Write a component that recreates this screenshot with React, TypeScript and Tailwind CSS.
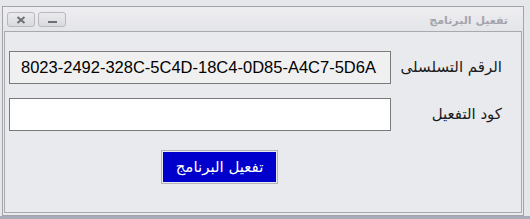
import React from "react";

export default function App() {
  return (
    <div className="w-[530px] h-[219px] bg-[#e6e7eb] flex flex-col overflow-hidden">
      <div className="flex-1 pt-[6px] pl-[2px] pr-[6px] flex flex-col">
        <div className="flex-1 flex flex-col border border-[#a3a3aa] bg-[#e9eaee]">
          {/* title bar */}
          <div className="h-[24px] flex items-start justify-between bg-gradient-to-b from-[#eeeef1] to-[#e4e5e9] pl-[4px] pr-[15px] pt-[5px]">
            <div className="flex gap-[3px]">
              <div className="w-[28px] h-[15px] rounded-[3px] border border-[#b8b8be] bg-gradient-to-b from-[#ebebee] to-[#d9dade] flex items-center justify-center">
                <svg width="10" height="8" viewBox="0 0 10 8">
                  <path d="M1.5 1 L8.5 7 M8.5 1 L1.5 7" stroke="#6e6e76" strokeWidth="2" />
                </svg>
              </div>
              <div className="w-[28px] h-[15px] rounded-[3px] border border-[#b8b8be] bg-gradient-to-b from-[#ebebee] to-[#d9dade] flex items-end justify-center pb-[3px]">
                <div className="w-[9px] h-[2px] bg-[#6e6e76]" />
              </div>
            </div>
            <div
              className="text-[11px] font-bold text-[#a4a4ac] leading-[14px] pt-[2px]"
              style={{ fontFamily: '"DejaVu Sans", sans-serif' }}
              dir="rtl"
            >
              تفعيل البرنامج
            </div>
          </div>
          {/* inner panel */}
          <div className="flex-1 mx-[1px] mb-[2px] border border-[#a9a9b0] bg-[#e9eaee] flex flex-col pl-[4px] pr-[19px] pt-[19px]">
            <div className="flex items-center">
              <div
                className="w-[382px] h-[33px] border border-[#7a7a7a] bg-[#f0f0f0] flex items-center pl-[11px] text-[16.5px] text-black"
                style={{ fontFamily: '"Liberation Sans", Arial, sans-serif' }}
              >
                8023-2492-328C-5C4D-18C4-0D85-A4C7-5D6A
              </div>
              <div
                className="flex-1 text-right text-[15px] text-[#1a1a1a]"
                style={{ fontFamily: '"DejaVu Sans", sans-serif' }}
                dir="rtl"
              >
                الرقم التسلسلى
              </div>
            </div>
            <div className="flex items-center mt-[14px]">
              <div className="w-[382px] h-[33px] border border-[#7a7a7a] bg-white" />
              <div
                className="flex-1 text-right text-[15px] text-[#1a1a1a]"
                style={{ fontFamily: '"DejaVu Sans", sans-serif' }}
                dir="rtl"
              >
                كود التفعيل
              </div>
            </div>
            <div className="flex mt-[19px] pl-[152px]">
              <div className="w-[117px] h-[34px] border border-[#b4b4b8] bg-[#e9eaee] p-[1px]">
                <div
                  className="w-full h-full bg-[#0000cc] flex items-center justify-center text-white text-[15px]"
                  style={{ fontFamily: '"DejaVu Sans", sans-serif' }}
                  dir="rtl"
                >
                  تفعيل البرنامج
                </div>
              </div>
            </div>
          </div>
        </div>
      </div>
      <div className="h-[3px] bg-[#a8abb9]" />
    </div>
  );
}
